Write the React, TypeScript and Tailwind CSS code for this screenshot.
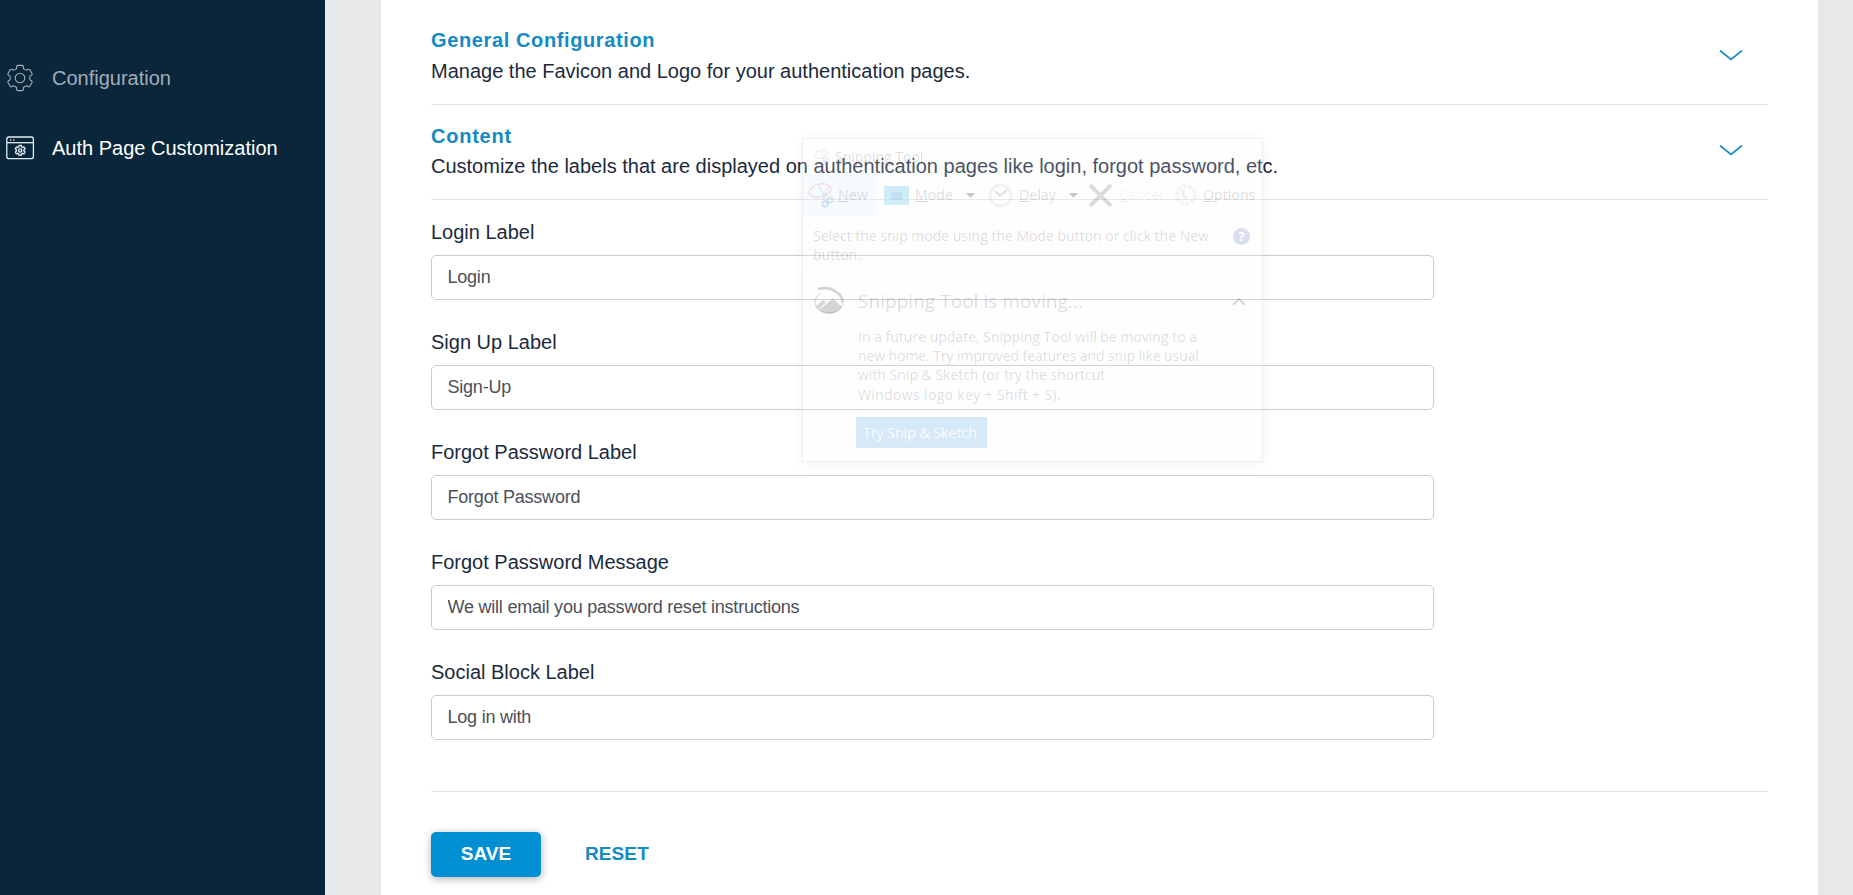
import React from 'react';

const gearPath = (cx: number, cy: number, ro: number, ri: number) => {
  const pt = (r: number, deg: number) => {
    const a = (deg * Math.PI) / 180;
    return `${(cx + r * Math.sin(a)).toFixed(2)} ${(cy - r * Math.cos(a)).toFixed(2)}`;
  };
  let d = '';
  for (let i = 0; i < 6; i++) {
    const a = i * 60;
    d += `${i === 0 ? 'M' : 'L'}${pt(ri, a - 19)}Q${pt(ro * 1.02, a - 18)} ${pt(ro, a - 9)}L${pt(ro, a + 9)}Q${pt(ro * 1.02, a + 18)} ${pt(ri, a + 19)}Q${pt(ri * 0.92, a + 30)} ${pt(ri, a + 41)}`;
  }
  return d + 'Z';
};

const GearIcon = () => (
  <svg className="h-8 w-8 shrink-0" viewBox="0 0 32 32" fill="none" stroke="#a3adb6" strokeWidth="1.1" strokeLinejoin="round">
    <path d={gearPath(16, 16, 12.8, 10.2)} />
    <circle cx="16" cy="16" r="4.8" />
  </svg>
);

const WindowGearIcon = () => (
  <svg className="h-8 w-8 shrink-0" viewBox="0 0 32 32" fill="none" stroke="#e6edf0" strokeWidth="1.3" strokeLinejoin="round">
    <rect x="2.8" y="5" width="26.6" height="21.6" rx="2.2" />
    <path d="M3 10.7H29.2" />
    <path d="M6 8h1.2M9.2 8h1.2" strokeWidth="1.4" />
    <path d={gearPath(16.2, 18.4, 5.1, 3.8)} />
    <circle cx="16.2" cy="18.4" r="1.6" />
  </svg>
);

const Chevron = () => (
  <svg className="mt-[40px] mr-[25px] h-[12px] w-[24px]" viewBox="0 0 24 12" fill="none" stroke="#148bc3" strokeWidth="1.7">
    <path d="M1 0.5L12 9.5L23 0.5" />
  </svg>
);

const fields = [
  ['Login Label', 'Login'],
  ['Sign Up Label', 'Sign-Up'],
  ['Forgot Password Label', 'Forgot Password'],
  ['Forgot Password Message', 'We will email you password reset instructions'],
  ['Social Block Label', 'Log in with'],
];

const Triangle = () => (
  <svg className="h-[5px] w-[9px] shrink-0" viewBox="0 0 9 5"><path d="M0 0H9L4.5 5Z" fill="#000" fillOpacity="0.22" /></svg>
);

const Scissors = ({ small = false }: { small?: boolean }) => (
  <svg className={small ? 'h-[16px] w-[20px] shrink-0' : 'h-[26px] w-[26px] shrink-0'} viewBox="0 0 26 26" fill="none">
    <ellipse cx="12" cy="8.5" rx="11" ry="6.5" stroke="#e02020" strokeOpacity="0.13" strokeWidth="1.4" transform="rotate(-12 12 8.5)" />
    <path d="M11 3L17 17M20 5L15 18" stroke="#000" strokeOpacity="0.07" strokeWidth="1.5" />
    <circle cx="17" cy="22" r="2.7" stroke="#2b84cc" strokeOpacity="0.2" strokeWidth="1.9" />
    <circle cx="22" cy="18" r="2.5" stroke="#2b84cc" strokeOpacity="0.17" strokeWidth="1.9" />
  </svg>
);

const SnippingTool = () => (
  <div className="absolute top-[138px] left-[802px] h-[324px] w-[461px] border border-[#88888820] bg-[#fafafa33] font-['Open_Sans','Noto_Sans',sans-serif] text-[#00000026] shadow-[0_2px_14px_rgba(0,0,0,0.05)]">
    <div className="flex h-[35px] items-center gap-[3px] pl-[9px] text-[14px]">
      <Scissors small />
      <span>Snipping Tool</span>
    </div>
    <div className="flex h-[42px] items-center text-[14.2px]">
      <div className="flex h-full w-[73px] shrink-0 items-center gap-[4px] bg-[#d8ecfa38] pl-[5px]">
        <Scissors />
        <span><u>N</u>ew</span>
      </div>
      <svg className="ml-[8px] h-[19px] w-[25px] shrink-0" viewBox="0 0 25 19">
        <path d="M0 0H25V19H0Z" fill="#b5e0f5" fillOpacity="0.62" />
        <path d="M7 6H18V14H7Z" fill="#8cbfe5" fillOpacity="0.25" />
      </svg>
      <span className="ml-[6px] w-[51px] shrink-0"><u>M</u>ode</span>
      <Triangle />
      <svg className="ml-[13px] h-[25px] w-[25px] shrink-0" viewBox="0 0 25 25" fill="none" stroke="#000">
        <circle cx="12.5" cy="12.5" r="10.5" strokeWidth="3" strokeOpacity="0.05" />
        <path d="M7 8L12 13L19 7" strokeWidth="2" strokeOpacity="0.12" />
      </svg>
      <span className="ml-[6px] w-[50px] shrink-0"><u>D</u>elay</span>
      <Triangle />
      <svg className="ml-[11px] h-[23px] w-[23px] shrink-0" viewBox="0 0 23 23" stroke="#000" strokeOpacity="0.14" strokeWidth="4">
        <path d="M1 1L22 22M22 1L1 22" />
      </svg>
      <span className="ml-[7px] w-[55px] shrink-0 text-[#00000010]"><u>C</u>ancel</span>
      <svg className="h-[24px] w-[24px] shrink-0" viewBox="0 0 24 24" fill="none" stroke="#253547">
        <circle cx="12" cy="12" r="9" strokeWidth="4" strokeOpacity="0.05" strokeDasharray="4 1.5" />
        <path d="M9 7V12L13 16" strokeWidth="3" strokeOpacity="0.07" />
      </svg>
      <span className="ml-[5px]"><u>O</u>ptions</span>
    </div>
    <div className="flex h-[61px] justify-between bg-gradient-to-b from-transparent to-[#eef1f820] pt-[10px] pr-[12px] pl-[10px] text-[14px] leading-[19px]">
      <p className="whitespace-nowrap">Select the snip mode using the Mode button or click the New<br />button.</p>
      <span className="mt-[2px] flex h-[17px] w-[17px] items-center justify-center rounded-full bg-[#8b9dd050] text-[13px] font-bold text-white">?</span>
    </div>
    <div className="flex pt-[7px] pl-[11px]">
      <svg className="mt-[2px] h-[30px] w-[30px] shrink-0" viewBox="0 0 30 30" fill="none">
        <path d="M4 3C18 -0.5 29 8 28.5 17" stroke="#000" strokeOpacity="0.17" strokeWidth="2.6" />
        <path d="M28.5 17C28 24 22 27 15 27C7 27 1 23 1 16C1 12 4 8 8 7" stroke="#000" strokeOpacity="0.13" strokeWidth="1.2" />
        <path d="M5 24L19 12.5L28 21C21 30 11 29 5 24ZM2 20L9 14L12 16L5 23Z" fill="#000" fillOpacity="0.16" />
      </svg>
      <div className="ml-[14px]">
        <h3 className="text-[19px] leading-[34px] tracking-[0.04px] whitespace-nowrap">Snipping Tool is moving...</h3>
        <p className="mt-[9px] text-[14px] leading-[19.2px] whitespace-nowrap">
          In a future update, Snipping Tool will be moving to a<br />
          <span className="tracking-[-0.08px]">new home. Try improved features and snip like usual</span><br />
          with Snip &amp; Sketch (or try the shortcut<br />
          <span className="tracking-[0.35px]">Windows logo key + Shift + S).</span>
        </p>
        <div className="mt-[13px] -ml-[2px] flex h-[31px] w-[131px] items-center bg-[#abd3f578] pl-[7px] text-[14.1px] whitespace-nowrap text-[#ffffffe8]">Try Snip &amp; Sketch</div>
      </div>
      <svg className="mt-[13px] ml-auto mr-[16px] h-[10px] w-[14px] shrink-0" viewBox="0 0 14 10" fill="none" stroke="#000" strokeOpacity="0.2" strokeWidth="1.5">
        <path d="M1 8L7 2L13 8" />
      </svg>
    </div>
  </div>
);

export default function App() {
  return (
    <div className="relative flex h-[895px] w-full overflow-hidden bg-[#e7e8e9] font-['Liberation_Sans',Arial,sans-serif]">
      <aside className="flex w-[325px] shrink-0 flex-col bg-[#0a263b] pt-[62px] pl-1 text-[20px]">
        <a className="flex h-8 items-center gap-4 text-[#a3adb6]"><GearIcon />Configuration</a>
        <a className="mt-[38px] flex h-8 items-center gap-4 text-white"><WindowGearIcon />Auth Page Customization</a>
      </aside>
      <main className="ml-[56px] flex w-[1437px] shrink-0 flex-col bg-white px-[50px] pt-[10px]">
        <section className="flex h-[95px] shrink-0 items-start justify-between border-b border-[#e2e4e6]">
          <div className="pt-4">
            <h2 className="text-[20px] leading-[28px] font-bold tracking-[0.62px] text-[#148bc3]">General Configuration</h2>
            <p className="mt-[3px] text-[20px] leading-[28px] text-[#1b2a3d]">Manage the Favicon and Logo for your authentication pages.</p>
          </div>
          <Chevron />
        </section>
        <section className="flex h-[95px] shrink-0 items-start justify-between border-b border-[#e2e4e6]">
          <div className="pt-[17px]">
            <h2 className="text-[20px] leading-[28px] font-bold tracking-[0.75px] text-[#148bc3]">Content</h2>
            <p className="mt-[2px] text-[20px] leading-[28px] text-[#1b2a3d]">Customize the labels that are displayed on authentication pages like login, forgot password, etc.</p>
          </div>
          <Chevron />
        </section>
        <div className="flex h-[592px] shrink-0 flex-col border-b border-[#e2e4e6] pt-[18px]">
          {fields.map(([label, value]) => (
            <label key={label} className="flex h-[110px] shrink-0 flex-col text-[20px] leading-[28px] text-[#1b2a3d]">
              {label}
              <input defaultValue={value} className="mt-[9px] h-[45px] w-[1003px] rounded-[5px] border border-[#c9cbce] bg-white px-[15.5px] pb-[1px] text-[18px] tracking-[-0.22px] text-[#4c5057] outline-none" />
            </label>
          ))}
        </div>
        <div className="mt-[40px] flex h-[45px] items-center">
          <button className="h-[45px] w-[110px] rounded-[5px] bg-[#008fd0] text-[19px] font-bold text-white shadow-[0_2px_8px_rgba(0,0,0,0.3)]">SAVE</button>
          <button className="ml-[44px] text-[19px] font-bold tracking-[0.1px] text-[#148bc3]">RESET</button>
        </div>
      </main>
      <SnippingTool />
    </div>
  );
}
